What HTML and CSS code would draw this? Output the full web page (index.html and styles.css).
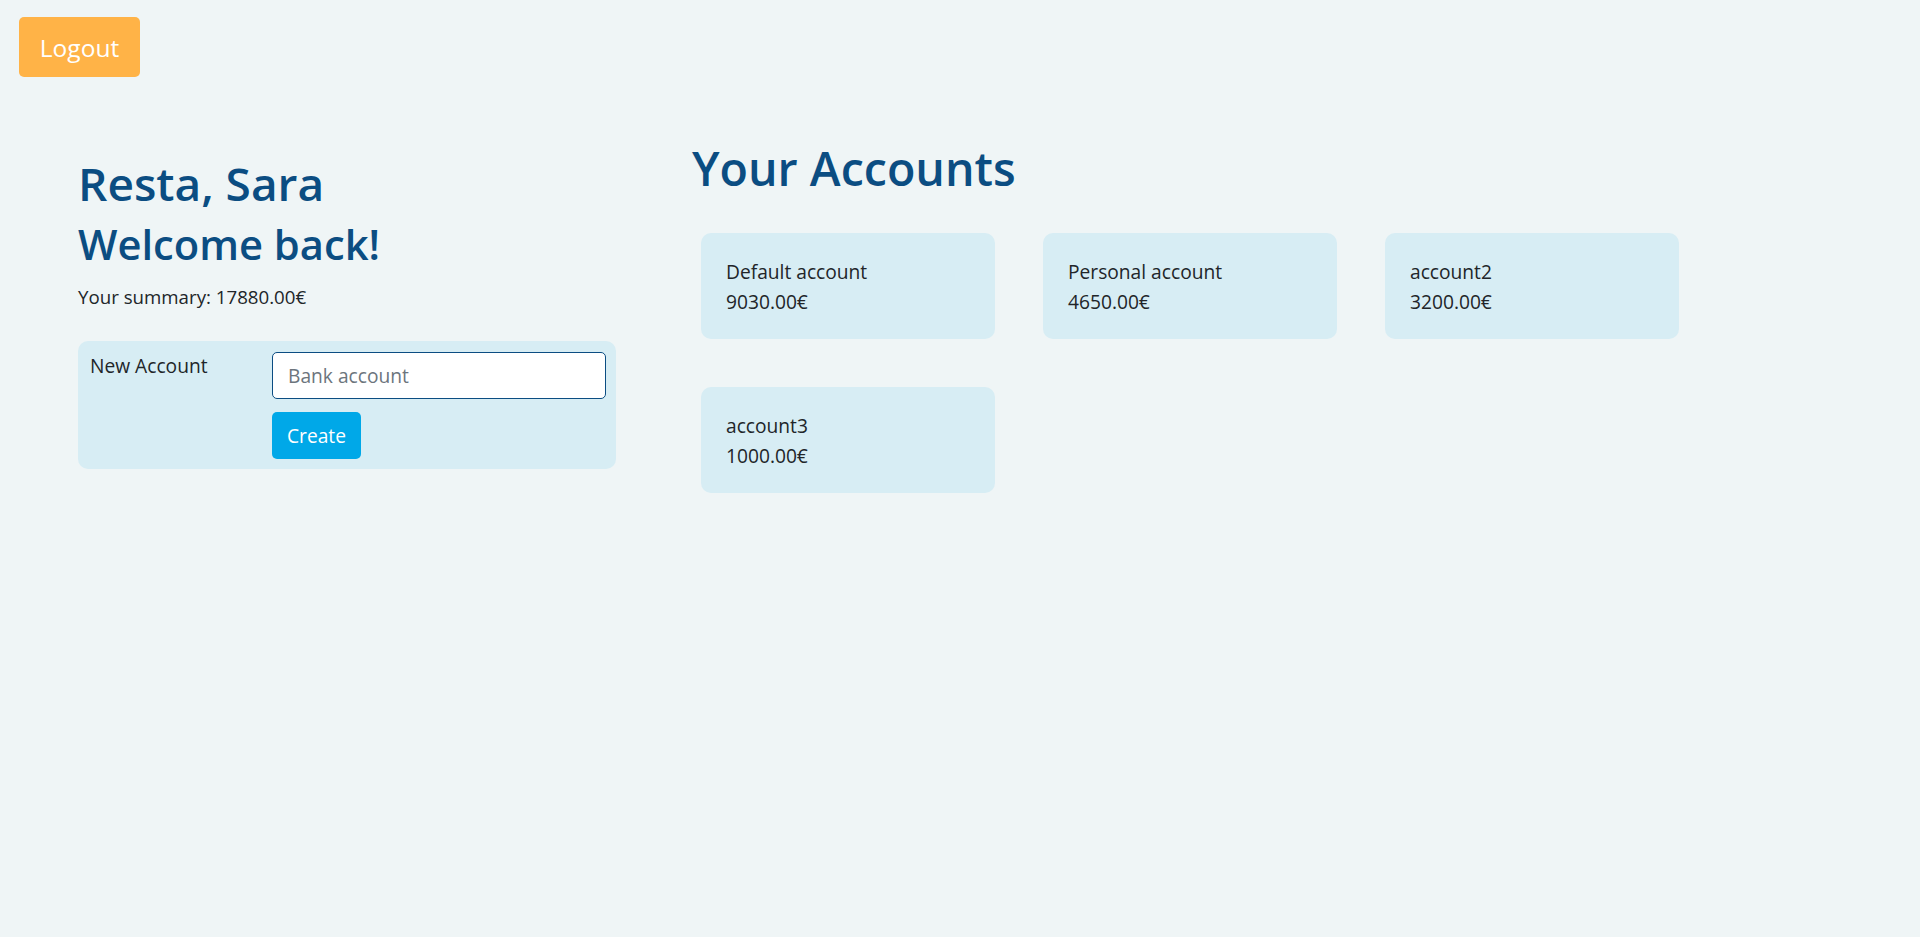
FILE: index.html
```html
<!DOCTYPE html>
<html lang="en">
<head>
<meta charset="utf-8">
<title>Accounts</title>
<link rel="stylesheet" href="styles.css">
</head>
<body>
<header class="topbar">
  <button class="btn-logout" type="button">Logout</button>
</header>
<main class="main">
  <section class="profile">
    <h1 class="title">Resta, Sara</h1>
    <h2 class="subtitle">Welcome back!</h2>
    <p class="summary">Your summary: 17880.00€</p>
    <form class="new-account">
      <label class="new-label" for="acc">New Account</label>
      <div class="new-fields">
        <input id="acc" class="new-input" type="text" placeholder="Bank account">
        <button class="btn-create" type="button">Create</button>
      </div>
    </form>
  </section>
  <section class="accounts">
    <h1 class="title title-wide">Your Accounts</h1>
    <div class="cards">
      <div class="card"><div>Default account</div><div>9030.00€</div></div>
      <div class="card"><div>Personal account</div><div>4650.00€</div></div>
      <div class="card"><div>account2</div><div>3200.00€</div></div>
      <div class="card"><div>account3</div><div>1000.00€</div></div>
    </div>
  </section>
</main>
</body>
</html>
```

FILE: styles.css
```css
* { box-sizing: border-box; }
html, body { margin: 0; padding: 0; }
body {
  background: #eff5f6;
  color: #212529;
  font-family: "Open Sans", "Noto Sans", sans-serif;
  font-size: 19.2px;
  line-height: 1.5;
  min-height: 937px;
}
.topbar {
  padding: 17px 0 0 19px;
  height: 77px;
}
.btn-logout {
  width: 121px;
  height: 60px;
  border: 0;
  border-radius: 5px;
  background: #ffb347;
  color: #ffffff;
  font-family: inherit;
  font-size: 24.5px;
  padding: 0;
}
.main {
  display: flex;
  padding-left: 78px;
}
.profile {
  width: 538px;
  flex: none;
  padding-top: 78px;
}
.title {
  margin: 0;
  font-size: 46px;
  line-height: 57.6px;
  font-weight: 600;
  color: #0b4d82;
}
.title-wide {
  font-size: 46.6px;
}
.subtitle {
  margin: 5px 0 0;
  font-size: 41.7px;
  line-height: 51.6px;
  font-weight: 600;
  color: #0b4d82;
}
.summary {
  margin: 14px 0 0;
  font-size: 18.7px;
}
.new-account {
  margin-top: 30px;
  background: #d7edf4;
  border-radius: 10px;
  padding: 11px 10px 10px 12px;
  display: flex;
}
.new-label {
  width: 182px;
  flex: none;
}
.new-fields {
  flex: 1;
  display: flex;
  flex-direction: column;
  align-items: flex-start;
  gap: 13px;
}
.new-input {
  width: 334px;
  height: 47px;
  border: 1px solid #0b4d82;
  border-radius: 5px;
  background: #fff;
  padding: 0 15px;
  font-family: inherit;
  font-size: 19.2px;
  color: #212529;
}
.new-input::placeholder { color: #6c757d; }
.btn-create {
  width: 89px;
  height: 47px;
  border: 0;
  border-radius: 5px;
  background: #00a8e8;
  color: #fff;
  font-family: inherit;
  font-size: 19.2px;
  padding: 0;
}
.accounts {
  margin-left: 76px;
  padding-top: 63px;
}
.cards {
  margin: 35px 0 0 9px;
  display: grid;
  grid-template-columns: repeat(3, 294px);
  column-gap: 48px;
  row-gap: 48px;
}
.card {
  background: #d7edf4;
  border-radius: 10px;
  padding: 24px 24px 22px 25px;
  line-height: 30px;
}
```
